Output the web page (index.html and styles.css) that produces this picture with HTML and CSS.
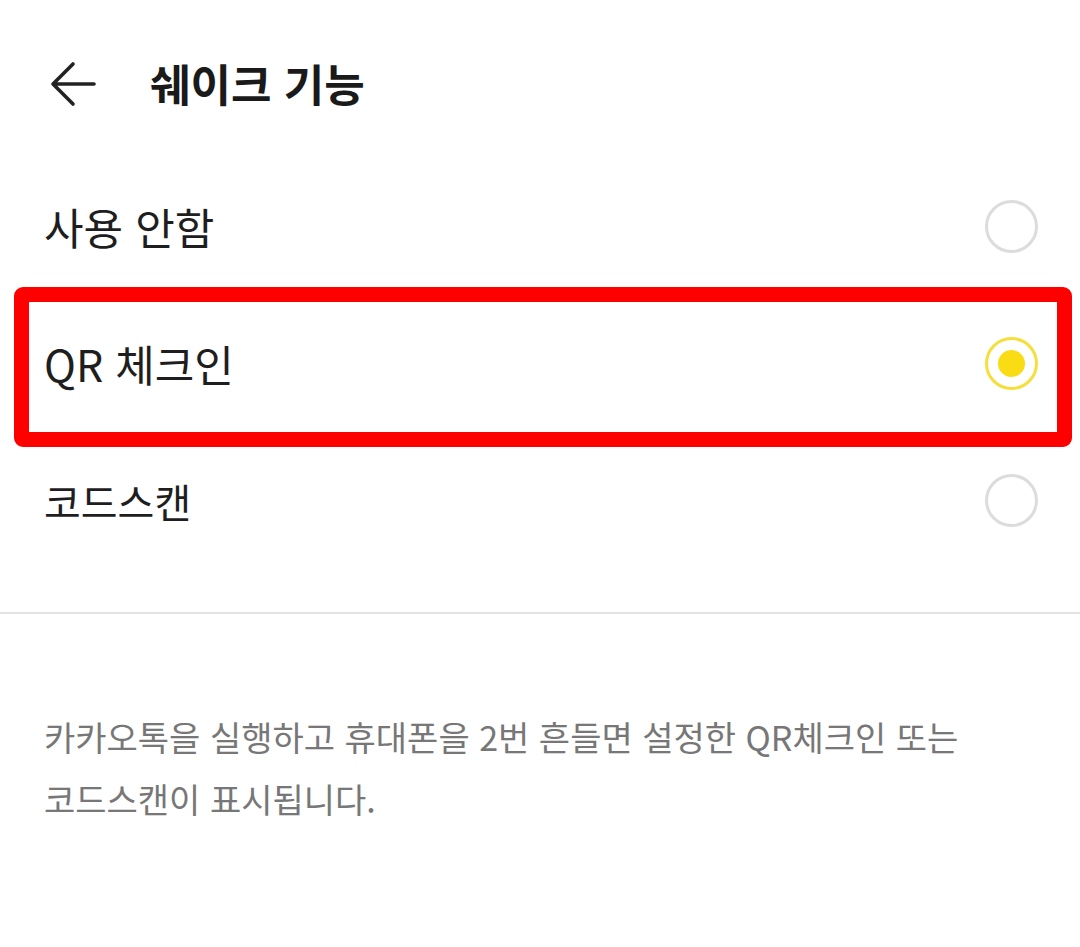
FILE: index.html
```html
<!DOCTYPE html>
<html lang="ko">
<head>
<meta charset="utf-8">
<link rel="stylesheet" href="styles.css">
</head>
<body>
<div class="page">
  <header class="header">
    <svg class="back" width="48" height="48" viewBox="0 0 48 48" aria-hidden="true">
      <path d="M5 24 H46 M25 4 L5 24 L25 44" fill="none" stroke="#222" stroke-width="3.6" stroke-linecap="round" stroke-linejoin="round"/>
    </svg>
    <h1 class="title">쉐이크 기능</h1>
  </header>
  <ul class="options">
    <li class="option">
      <span class="label">사용 안함</span>
      <span class="radio"></span>
    </li>
    <li class="option option-selected">
      <span class="label">QR 체크인</span>
      <span class="radio radio-on"><span class="dot"></span></span>
      <span class="highlight"></span>
    </li>
    <li class="option">
      <span class="label label-narrow">코드스캔</span>
      <span class="radio"></span>
    </li>
  </ul>
  <div class="divider"></div>
  <p class="desc">카카오톡을 실행하고 휴대폰을 2번 흔들면 설정한 QR체크인 또는<br>코드스캔이 표시됩니다.</p>
</div>
</body>
</html>
```

FILE: styles.css
```css
* { box-sizing: border-box; }
html, body {
  margin: 0;
  padding: 0;
  background: #ffffff;
}
body {
  font-family: "Noto Sans CJK KR", "Noto Sans", sans-serif;
  color: #1e1e1e;
}
.page {
  width: 1080px;
  height: 947px;
  overflow: hidden;
}
.header {
  height: 158px;
  display: flex;
  align-items: center;
  padding: 0 0 0 48px;
  gap: 54px;
}
.back { flex: none; display: block; margin-top: 10px; }
.title {
  margin: 0;
  font-size: 44px;
  font-weight: 700;
  line-height: 1;
  color: #1a1a1a;
  margin-top: 8px;
}
.options {
  list-style: none;
  margin: 0;
  padding: 0;
}
.option {
  position: relative;
  height: 137px;
  display: flex;
  align-items: center;
  justify-content: space-between;
  padding: 0 42px 0 44px;
}
.label {
  font-size: 43px;
  line-height: 1;
  color: #1e1e1e;
}
.label-narrow {
  font-size: 40px;
}
.radio {
  width: 53px;
  height: 53px;
  border-radius: 50%;
  border: 3px solid #dcdcdc;
  display: flex;
  align-items: center;
  justify-content: center;
}
.radio-on {
  border-color: #f6df3c;
}
.dot {
  width: 27px;
  height: 27px;
  border-radius: 50%;
  background: #fadc14;
}
.highlight {
  position: absolute;
  left: 14px;
  right: 8px;
  top: -8px;
  bottom: -15px;
  border: 15px solid #ff0000;
  border-radius: 9px;
  pointer-events: none;
}
.divider {
  margin-top: 43px;
  height: 2px;
  background: #e3e3e3;
}
.desc {
  margin: 0;
  padding: 92px 44px 0 44px;
  font-size: 34px;
  line-height: 62px;
  color: #777777;
}
```
